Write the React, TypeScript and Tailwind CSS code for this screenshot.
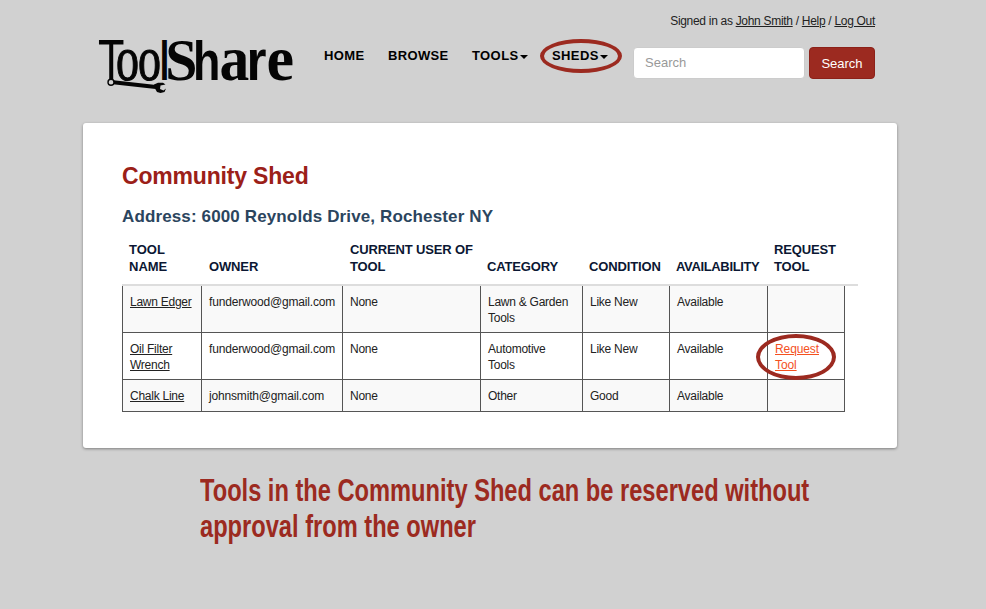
import type { ReactNode } from "react";

const columns = "grid-cols-[80px_141px_138px_102px_87px_98px_77px]";

const headings: { lines: string[]; style: string }[] = [
  { lines: ["TOOL", "NAME"], style: "pl-[7px] tracking-normal" },
  { lines: ["OWNER"], style: "pl-[7px]" },
  { lines: ["CURRENT USER OF", "TOOL"], style: "pl-[7px]" },
  { lines: ["CATEGORY"], style: "pl-[6px]" },
  { lines: ["CONDITION"], style: "pl-[6px]" },
  { lines: ["AVAILABILITY"], style: "pl-[6px] tracking-[-0.35px]" },
  { lines: ["REQUEST", "TOOL"], style: "pl-[6px]" },
];

type Tool = {
  name: string[];
  owner: string;
  category: string[];
  condition: string;
  request?: boolean;
};

const tools: Tool[] = [
  { name: ["Lawn Edger"], owner: "funderwood@gmail.com", category: ["Lawn & Garden", "Tools"], condition: "Like New" },
  { name: ["Oil Filter", "Wrench"], owner: "funderwood@gmail.com", category: ["Automotive", "Tools"], condition: "Like New", request: true },
  { name: ["Chalk Line"], owner: "johnsmith@gmail.com", category: ["Other"], condition: "Good" },
];

function Lines({ items }: { items: string[] }) {
  return (
    <>
      {items.map((line) => (
        <span key={line} className="block">{line}</span>
      ))}
    </>
  );
}

function Cell({ children }: { children?: ReactNode }) {
  return (
    <div className="border-r border-b border-[#555] pl-[7px] pt-2 first:border-l whitespace-nowrap">
      {children}
    </div>
  );
}

function Caret() {
  return <span className="ml-[1px] mt-px border-x-4 border-t-4 border-x-transparent border-t-black" />;
}

function Ring({ className }: { className: string }) {
  return <span className={`pointer-events-none absolute rounded-[50%] border-4 border-[#9c2a20] ${className}`} />;
}

function Logo() {
  return (
    <svg width="200" height="64" viewBox="96 34 200 64" className="shrink-0 overflow-visible" aria-label="ToolShare">
      <g fill="#050505" fontFamily="'Liberation Serif', serif">
        <text transform="translate(98 80) scale(.76 1)" fontSize="57" fontFamily="'Liberation Sans', sans-serif">T</text>
        <text transform="translate(116 80) scale(.92 1.27)" fontSize="50" stroke="#050505" strokeWidth="0.9">o</text>
        <text transform="translate(138 80) scale(.92 1.27)" fontSize="50" stroke="#050505" strokeWidth="0.9">o</text>
        <text transform="translate(159.7 80) scale(.62 1)" fontSize="55" fontWeight="700" fontFamily="'Liberation Sans', sans-serif">l</text>
        <text transform="translate(165.2 80) scale(.98 1)" fontSize="59" fontWeight="700">S</text>
        <text transform="translate(193 80) scale(.8 1)" fontSize="56" fontWeight="700" fontFamily="'Liberation Sans', sans-serif">h</text>
        <text transform="translate(219.5 80) scale(.93 1)" fontSize="64" fontWeight="700">a</text>
        <text transform="translate(246.5 80) scale(.9 1)" fontSize="57" fontWeight="700" fontFamily="'Liberation Sans', sans-serif">r</text>
        <text transform="translate(266.5 80) scale(.97 1)" fontSize="64" fontWeight="700">e</text>
      </g>
      <path d="M111 82 156 87" stroke="#050505" strokeWidth="4" />
      <circle cx="111" cy="82.3" r="3" fill="#d1d1d1" stroke="#050505" strokeWidth="1.4" />
      <path d="M154 84.5 158 82.8 163 82.8 165.5 84.5 160.5 85.5 160 89 163.5 90.5 166 88.5 164.5 92 160.5 93 157 92 155 88.5Z" fill="#050505" />
    </svg>
  );
}

export default function App() {
  return (
    <div className="h-[609px] w-[986px] overflow-hidden bg-[#d1d1d1] font-['Liberation_Sans',sans-serif] text-[#222]">
      <header className="flex h-[122px] pl-[96px]">
        <div className="pt-[34px]">
          <Logo />
        </div>
        <nav className="flex items-start pl-[28px] pt-[48px] text-[13px] leading-4 font-bold text-black">
          <a className="w-[64px] tracking-[0.4px]">HOME</a>
          <a className="w-[84px] tracking-[0.35px]">BROWSE</a>
          <a className="flex w-[80px] items-center tracking-[0.4px]">TOOLS<Caret /></a>
          <a className="relative flex w-[82px] items-center tracking-[0.4px]">
            SHEDS<Caret />
            <Ring className="-left-[12px] -top-[9px] h-[34px] w-[82px]" />
          </a>
        </nav>
        <div className="flex w-[241px] flex-col items-end">
          <p className="mt-[13px] h-[34px] text-[12px] leading-4 tracking-[-0.3px] whitespace-nowrap">
            Signed in as <a className="underline">John Smith</a> / <a className="underline">Help</a> / <a className="underline">Log Out</a>
          </p>
          <div className="flex gap-1">
            <div className="flex h-[32px] w-[172px] items-center rounded-[4px] border border-[#ccc] bg-white pl-[11px] text-[13px] text-[#999]">Search</div>
            <button className="h-[32px] w-[66px] rounded-[4px] border border-[#8c2119] bg-[#9c2a20] pt-px text-[13px] text-white">Search</button>
          </div>
        </div>
      </header>

      <main className="ml-[83px] mt-px h-[325px] w-[814px] rounded-[3px] bg-white pl-[39px] pt-[38px] shadow-[0_1px_3px_rgba(0,0,0,0.4)]">
        <h1 className="h-[41px] text-[23px] leading-[30px] font-bold tracking-[-0.18px] text-[#9b2018]">Community Shed</h1>
        <h2 className="h-[39px] text-[17px] leading-[29px] font-bold tracking-[0.13px] text-[#2b455e]">Address: 6000 Reynolds Drive, Rochester NY</h2>
        <div className={`grid h-[45px] w-[736px] items-end border-b-2 border-[#ddd] pb-[10px] text-[13px] leading-[17px] font-bold tracking-[-0.14px] text-[#0b1733] ${columns}`}>
          {headings.map((heading) => (
            <div key={heading.lines.join(" ")} className={`whitespace-nowrap ${heading.style}`}>
              <Lines items={heading.lines} />
            </div>
          ))}
        </div>
        <div className="grid w-[723px] grid-rows-[47px_47px_32px] text-[12px] leading-4 tracking-[-0.25px]">
          {tools.map((tool) => (
            <div key={tool.name.join(" ")} className={`grid odd:bg-[#f9f9f9] ${columns}`}>
              <Cell><a className="underline"><Lines items={tool.name} /></a></Cell>
              <Cell><span className="tracking-[-0.17px]">{tool.owner}</span></Cell>
              <Cell>None</Cell>
              <Cell><Lines items={tool.category} /></Cell>
              <Cell>{tool.condition}</Cell>
              <Cell>Available</Cell>
              <Cell>
                {tool.request && (
                  <a className="relative block tracking-[-0.1px] text-[#f4511e] underline">
                    <Lines items={["Request", "Tool"]} />
                    <Ring className="-left-[19px] -top-[7px] h-[46px] w-[80px]" />
                  </a>
                )}
              </Cell>
            </div>
          ))}
        </div>
      </main>

      <p className="ml-[200px] mt-[24px] w-[780px] origin-left scale-x-[0.739] text-[32px] leading-[36px] font-bold whitespace-nowrap text-[#9c2a20]">
        <span className="block w-[860px]"><Lines items={["Tools in the Community Shed can be reserved without", "approval from the owner"]} /></span>
      </p>
    </div>
  );
}
